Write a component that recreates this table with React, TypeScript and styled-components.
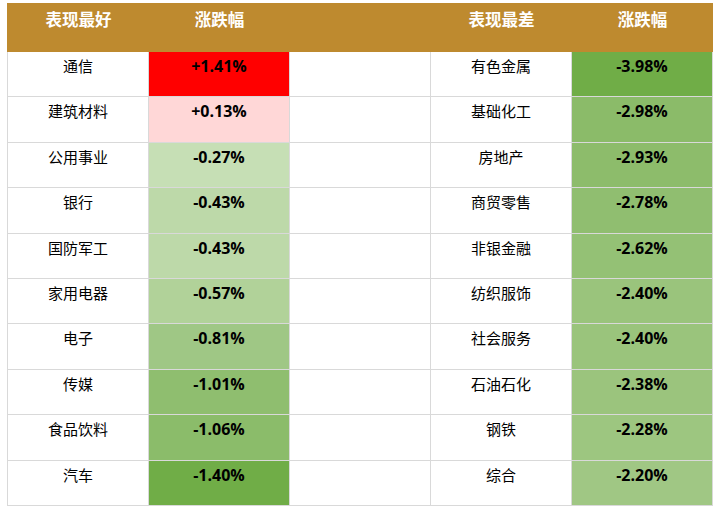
import React from "react";
import styled, { createGlobalStyle } from "styled-components";

const Global = createGlobalStyle`
  html, body { margin: 0; padding: 0; background: #ffffff; }
  body { font-family: "Noto Sans CJK SC", "Noto Sans", sans-serif; }
`;

const Page = styled.div`
  padding: 3px 0 0 7px;
`;

const Table = styled.div`
  width: 706px;
  display: flex;
  flex-direction: column;
`;

const HeaderRow = styled.div`
  display: grid;
  grid-template-columns: repeat(5, 141px);
  padding-left: 1px;
  height: 49px;
  background: #be8a2f;
`;

const HeaderCell = styled.div`
  color: #ffffff;
  font-size: 16.5px;
  font-weight: 700;
  line-height: 21px;
  text-align: center;
  padding-top: 6px;
  font-family: "Noto Sans CJK SC", sans-serif;
`;

const Body = styled.div`
  display: grid;
  grid-template-columns: repeat(5, 141px);
  grid-auto-rows: 45.4px;
  border-left: 1px solid #d9d9d9;
`;

const Cell = styled.div<{ $bg?: string }>`
  box-sizing: border-box;
  border-right: 1px solid #d9d9d9;
  border-bottom: 1px solid #d9d9d9;
  background: ${(p) => p.$bg ?? "#ffffff"};
  text-align: center;
  padding-top: 4px;
  line-height: 20px;
  color: #000000;
`;

const NameCell = styled(Cell)`
  font-size: 15px;
  font-family: "Noto Sans CJK SC", sans-serif;
`;

const ValueCell = styled(Cell)`
  font-size: 16px;
  font-weight: 700;
  font-family: "Open Sans", "Noto Sans", sans-serif;
`;

type Item = { name: string; value: string; bg: string };

const best: Item[] = [
  { name: "通信", value: "+1.41%", bg: "#ff0000" },
  { name: "建筑材料", value: "+0.13%", bg: "#ffd7d7" },
  { name: "公用事业", value: "-0.27%", bg: "#c6dfb5" },
  { name: "银行", value: "-0.43%", bg: "#bdd9a9" },
  { name: "国防军工", value: "-0.43%", bg: "#bdd9a9" },
  { name: "家用电器", value: "-0.57%", bg: "#b1d299" },
  { name: "电子", value: "-0.81%", bg: "#9fc785" },
  { name: "传媒", value: "-1.01%", bg: "#8fbe6f" },
  { name: "食品饮料", value: "-1.06%", bg: "#8bbc6a" },
  { name: "汽车", value: "-1.40%", bg: "#70ad47" },
];

const worst: Item[] = [
  { name: "有色金属", value: "-3.98%", bg: "#70ad47" },
  { name: "基础化工", value: "-2.98%", bg: "#8bbb69" },
  { name: "房地产", value: "-2.93%", bg: "#8dbc6b" },
  { name: "商贸零售", value: "-2.78%", bg: "#90be70" },
  { name: "非银金融", value: "-2.62%", bg: "#94c175" },
  { name: "纺织服饰", value: "-2.40%", bg: "#9ac47c" },
  { name: "社会服务", value: "-2.40%", bg: "#9ac47c" },
  { name: "石油石化", value: "-2.38%", bg: "#9bc47d" },
  { name: "钢铁", value: "-2.28%", bg: "#9dc680" },
  { name: "综合", value: "-2.20%", bg: "#a0c784" },
];

export default function App() {
  return (
    <>
      <Global />
      <Page>
        <Table>
          <HeaderRow>
            <HeaderCell>表现最好</HeaderCell>
            <HeaderCell>涨跌幅</HeaderCell>
            <HeaderCell />
            <HeaderCell>表现最差</HeaderCell>
            <HeaderCell>涨跌幅</HeaderCell>
          </HeaderRow>
          <Body>
            {best.map((b, i) => {
              const w = worst[i];
              return (
                <React.Fragment key={i}>
                  <NameCell>{b.name}</NameCell>
                  <ValueCell $bg={b.bg}>{b.value}</ValueCell>
                  <Cell />
                  <NameCell>{w.name}</NameCell>
                  <ValueCell $bg={w.bg}>{w.value}</ValueCell>
                </React.Fragment>
              );
            })}
          </Body>
        </Table>
      </Page>
    </>
  );
}
